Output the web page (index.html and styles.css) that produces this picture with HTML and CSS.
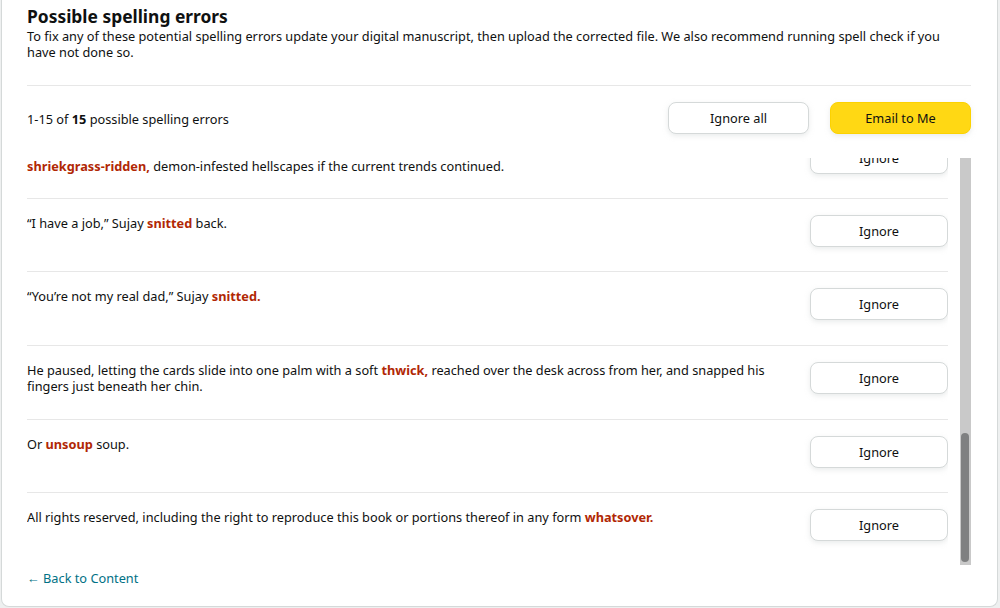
FILE: index.html
```html
<!DOCTYPE html>
<html lang="en">
<head>
<meta charset="utf-8">
<title>Possible spelling errors</title>
<link rel="stylesheet" href="styles.css">
</head>
<body>
<div class="card">
  <header class="head">
    <h1 class="title">Possible spelling errors</h1>
    <p class="desc">To fix any of these potential spelling errors update your digital manuscript, then upload the corrected file. We also recommend running spell check if you have not done so.</p>
  </header>
  <div class="toolbar">
    <div class="count">1-15 of <b>15</b> possible spelling errors</div>
    <div class="actions">
      <button class="btn btn-white btn-wide">Ignore all</button>
      <button class="btn btn-yellow btn-wide">Email to Me</button>
    </div>
  </div>
  <div class="list">
    <div class="viewport">
      <div class="row">
        <div class="text">Within a decade, the continent would be reduced to sprawling,<br><span class="err">shriekgrass-ridden,</span> demon-infested hellscapes if the current trends continued.</div>
        <button class="btn btn-white btn-row">Ignore</button>
      </div>
      <div class="row">
        <div class="text">“I have a job,” Sujay <span class="err">snitted</span> back.</div>
        <button class="btn btn-white btn-row">Ignore</button>
      </div>
      <div class="row row-tall">
        <div class="text">“You’re not my real dad,” Sujay <span class="err">snitted.</span></div>
        <button class="btn btn-white btn-row">Ignore</button>
      </div>
      <div class="row row-tall">
        <div class="text">He paused, letting the cards slide into one palm with a soft <span class="err">thwick,</span> reached over the desk across from her, and snapped his fingers just beneath her chin.</div>
        <button class="btn btn-white btn-row">Ignore</button>
      </div>
      <div class="row">
        <div class="text">Or <span class="err">unsoup</span> soup.</div>
        <button class="btn btn-white btn-row">Ignore</button>
      </div>
      <div class="row">
        <div class="text">All rights reserved, including the right to reproduce this book or portions thereof in any form <span class="err">whatsover.</span></div>
        <button class="btn btn-white btn-row">Ignore</button>
      </div>
    </div>
    <div class="scrollbar"><div class="thumb"></div></div>
  </div>
  <a class="back" href="#">← Back to Content</a>
</div>
</body>
</html>
```
FILE: styles.css
```css
* { box-sizing: border-box; }
html, body { margin: 0; padding: 0; }
body {
  width: 1000px;
  height: 608px;
  overflow: hidden;
  background: #eef0f0;
  font-family: "Noto Sans", "Liberation Sans", Arial, sans-serif;
  font-size: 12.75px;
  line-height: 16px;
  color: #0f1111;
  padding-left: 1px;
}
.card {
  width: 997px;
  height: 607px;
  background: #fff;
  border: 1px solid #d5d9d9;
  border-top: none;
  border-radius: 0 0 8px 8px;
  padding: 4px 26px 0 25px;
  display: flex;
  flex-direction: column;
}
.head {
  padding-bottom: 25px;
  border-bottom: 1px solid #e7e7e7;
}
.title {
  margin: 0;
  font-size: 17.4px;
  line-height: 24px;
  font-weight: 700;
}
.desc {
  margin: 0;
  font-size: 12.75px;
  line-height: 16px;
  padding-right: 10px;
}
.toolbar {
  display: flex;
  align-items: center;
  justify-content: space-between;
  padding-top: 16px;
  height: 48px;
}
.count { padding-top: 1px; }
.count b { font-weight: 700; }
.actions { display: flex; gap: 21px; }
.btn {
  font-family: inherit;
  font-size: 12.75px;
  color: #0f1111;
  height: 32px;
  border-radius: 8px;
  cursor: pointer;
  padding: 0;
}
.btn-white {
  background: #fff;
  border: 1px solid #d5d9d9;
  box-shadow: 0 2px 5px rgba(213, 217, 217, 0.5);
}
.btn-yellow {
  background: #ffd814;
  border: 1px solid #fcd200;
  box-shadow: 0 2px 5px rgba(213, 217, 217, 0.5);
}
.btn-wide { width: 141px; }
.btn-row { width: 138px; flex: none; }
.list {
  margin-top: 24px;
  height: 407px;
  display: flex;
}
.viewport {
  flex: 1;
  overflow: hidden;
  display: flex;
  flex-direction: column;
  justify-content: flex-end;
}
.row {
  flex: none;
  display: flex;
  align-items: flex-start;
  gap: 30px;
  border-top: 1px solid #e7e7e7;
  padding: 16px 0 24px;
}
.row-tall { padding-bottom: 25px; }
.text { flex: 1; }
.err { color: #b12704; font-weight: 700; }
.scrollbar {
  width: 11px;
  margin-left: 12px;
  background: #c9c9c9;
  display: flex;
  flex-direction: column;
  justify-content: flex-end;
  padding: 0 2px 3px 1px;
}
.thumb {
  height: 129px;
  background: #7f8081;
  border-radius: 4px;
}
.back {
  margin-top: 5px;
  color: #007185;
  text-decoration: none;
  line-height: 16px;
  align-self: flex-start;
}
```
